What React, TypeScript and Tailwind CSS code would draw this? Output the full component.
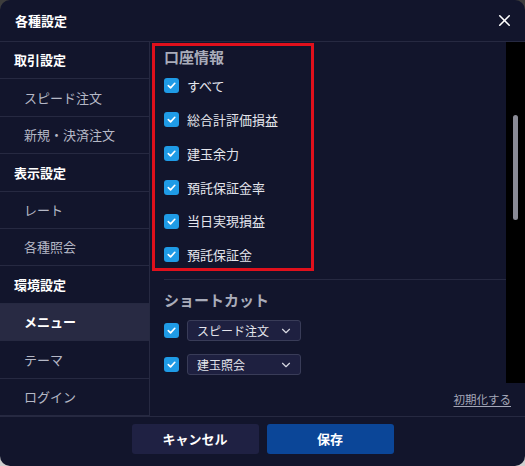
import { ChevronDown, X } from "lucide-react";

const sideItems: { label: string; head?: boolean; active?: boolean }[] = [
  { label: "取引設定", head: true },
  { label: "スピード注文" },
  { label: "新規・決済注文" },
  { label: "表示設定", head: true },
  { label: "レート" },
  { label: "各種照会" },
  { label: "環境設定", head: true },
  { label: "メニュー", active: true },
  { label: "テーマ" },
  { label: "ログイン" },
];

const accountItems = [
  "すべて",
  "総合計評価損益",
  "建玉余力",
  "預託保証金率",
  "当日実現損益",
  "預託保証金",
];

const shortcuts = ["スピード注文", "建玉照会"];

const Check = () => (
  <span className="flex h-[15px] w-[15px] shrink-0 items-center justify-center rounded-[3px] bg-[#1f9be6]">
    <svg width="11" height="11" viewBox="0 0 12 12" fill="none">
      <path d="M2.5 6.2 L5 8.6 L9.6 3.6" stroke="white" strokeWidth="1.8" strokeLinecap="round" strokeLinejoin="round" />
    </svg>
  </span>
);

const App = () => {
  return (
    <div
      className="h-[466px] w-[525px] bg-linear-to-b from-[#3c3c3c] to-[#cfcfcf]"
      style={{ fontFamily: '"Noto Sans CJK JP", "Noto Sans", sans-serif' }}
    >
      <div className="flex h-full flex-col overflow-hidden rounded-[10px] bg-[#12152c] text-white">
        {/* header */}
        <div className="flex h-[42px] shrink-0 items-center justify-between border-b border-[#262941] pl-[15px] pr-[11px]">
          <span className="text-[13px] font-bold leading-none">各種設定</span>
          <X size={19} strokeWidth={2} className="text-white" />
        </div>

        {/* body */}
        <div className="flex h-[374px] shrink-0">
          <div className="flex w-[150px] shrink-0 flex-col border-r border-[#262941]">
            {sideItems.map((it) => (
              <div
                key={it.label}
                className={
                  "flex h-[37.4px] shrink-0 items-center border-b border-[#262941] text-[13px] " +
                  (it.head ? "pl-[14px] font-bold text-white " : "pl-[24px] text-[#b5b8c6] ") +
                  (it.active ? "bg-[#282a43] font-bold text-white" : "")
                }
              >
                {it.label}
              </div>
            ))}
          </div>

          <div className="flex flex-1 flex-col">
            <div className="flex h-[341px] shrink-0">
              <div className="relative flex-1 pl-[14px]">
                <div className="absolute left-[2px] top-[1px] h-[228px] w-[162px] border-[3px] border-[#e0101c]" />
                <div className="mt-[5px] flex h-[20px] items-center text-[15px] font-bold text-[#a9acba]">口座情報</div>
                <div className="mt-[2px] flex flex-col">
                  {accountItems.map((a) => (
                    <div key={a} className="flex h-[33.8px] items-center gap-[8px]">
                      <Check />
                      <span className="text-[13px] text-[#e4e5ec]">{a}</span>
                    </div>
                  ))}
                </div>
                <div className="mt-[7px] h-px bg-[#262941]" />
                <div className="mt-[10px] flex h-[20px] items-center text-[15px] font-bold text-[#a9acba]">ショートカット</div>
                <div className="mt-[4px] flex flex-col">
                  {shortcuts.map((s) => (
                    <div key={s} className="flex h-[34px] items-center gap-[8px]">
                      <Check />
                      <div className="flex h-[21px] w-[114px] items-center justify-between rounded-[3px] border border-[#393c58] bg-[#1e2040] pl-[9px] pr-[7px]">
                        <span className="text-[12px] text-[#e4e5ec]">{s}</span>
                        <ChevronDown size={14} strokeWidth={2} className="text-[#d6d7e0]" />
                      </div>
                    </div>
                  ))}
                </div>
              </div>
              <div className="relative w-[19px] shrink-0 bg-black">
                <div className="absolute left-[7px] top-[73px] h-[105px] w-[5px] rounded-full bg-[#8a8b96]" />
              </div>
            </div>
            <div className="flex flex-1 items-center justify-end pr-[14px]">
              <span className="text-[11.5px] text-[#a4a7b8] underline underline-offset-2">初期化する</span>
            </div>
          </div>
        </div>

        {/* footer */}
        <div className="flex flex-1 items-start justify-center gap-[8px] border-t border-[#262941] pt-[7px]">
          <button className="h-[30px] w-[127px] rounded-[3px] bg-[#1f2143] text-[13px] font-bold text-white">
            キャンセル
          </button>
          <button className="h-[30px] w-[127px] rounded-[3px] bg-[#0b4698] text-[13px] font-bold text-white">
            保存
          </button>
        </div>
      </div>
    </div>
  );
};

export default App;
